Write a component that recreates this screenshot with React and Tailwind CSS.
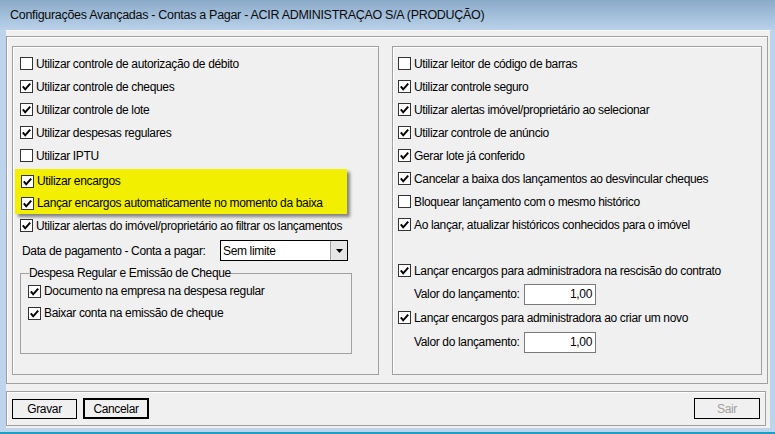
import React from 'react';

const Box = ({ on }) => (
  <span className="w-[13px] h-[13px] border border-[#333333] bg-white flex items-center justify-center shrink-0">
    {on && (
      <svg width="11" height="11" viewBox="0 0 11 11">
        <path d="M1.8 5.4 L4.2 8.3 L9.2 2.6" fill="none" stroke="#000" strokeWidth="2" />
      </svg>
    )}
  </span>
);

const Row = ({ on, label, className = 'h-[23px]' }) => (
  <div className={'flex items-center gap-[3px] ' + className}>
    <Box on={on} />
    <span className="whitespace-nowrap">{label}</span>
  </div>
);

const Valor = ({ className }) => (
  <div className={'flex items-center pl-[16px] ' + className}>
    <span className="w-[110px] whitespace-nowrap">Valor do lançamento:</span>
    <div className="w-[72px] h-[21px] border border-[#7a7a7a] bg-white flex items-center justify-end pr-[3px]">1,00</div>
  </div>
);

export default function App() {
  return (
    <div className="w-[775px] h-[434px] bg-[#bed4ec] overflow-hidden flex flex-col text-[12px] tracking-[-0.35px] text-black font-['Liberation_Sans',Arial,sans-serif] leading-[14px]">
      {/* Title bar */}
      <div className="h-[30px] shrink-0 bg-gradient-to-b from-[#8aaac9] to-[#bad2ea] flex items-center pl-[10px] text-[12.5px] tracking-[-0.3px] text-[#0a0a0a]">
        Configurações Avançadas - Contas a Pagar - ACIR ADMINISTRAÇAO S/A (PRODUÇÃO)
      </div>

      {/* Client area */}
      <div className="ml-[6px] w-[764px] h-[398px] bg-[#f0f0f0] border-t border-[#fafafa] pt-[5px] flex flex-col">
        <div className="w-[762px] h-[348px] border border-[#a0a0a0] shadow-[inset_1px_1px_0_#ffffff] flex pt-[9px] pl-[5px] gap-[13px]">
          {/* Left group */}
          <div className="w-[367px] h-[329px] border border-[#a0a0a0] shadow-[inset_1px_1px_0_#ffffff] pt-[5px] pl-[7px]">
            <Row on={false} label="Utilizar controle de autorização de débito" />
            <Row on label="Utilizar controle de cheques" />
            <Row on label="Utilizar controle de lote" />
            <Row on label="Utilizar despesas regulares" />
            <Row on={false} label="Utilizar IPTU" />
            <div className="-ml-[5px] w-[332px] mt-[2px] pt-[1px] pl-[6px] bg-[#f2f000] shadow-[3px_3px_3px_rgba(0,0,0,0.45)]">
              <Row on label="Utilizar encargos" className="h-[22px]" />
              <Row on label="Lançar encargos automaticamente no momento da baixa" className="h-[22px]" />
            </div>
            <Row on label="Utilizar alertas do imóvel/proprietário ao filtrar os lançamentos" />
            <div className="flex items-center h-[27px] pl-[2px]">
              <span className="w-[198px] whitespace-nowrap">Data de pagamento - Conta a pagar:</span>
              <div className="w-[128px] h-[21px] border border-black bg-white flex">
                <span className="flex-1 flex items-center pl-[2px]">Sem limite</span>
                <span className="w-[17px] bg-[#e6e6e6] border-l border-[#a0a0a0] flex items-center justify-center">
                  <svg width="7" height="4" viewBox="0 0 7 4"><path d="M0 0 H7 L3.5 4 Z" fill="#000" /></svg>
                </span>
              </div>
            </div>
            <fieldset className="mt-[2px] w-[332px] h-[88px] border border-[#a0a0a0] px-[7px]">
              <legend className="ml-[1px] leading-[14px]">Despesa Regular e Emissão de Cheque</legend>
              <Row on label="Documento na empresa na despesa regular" className="h-[22px]" />
              <Row on label="Baixar conta na emissão de cheque" className="h-[22px]" />
            </fieldset>
          </div>

          {/* Right group */}
          <div className="w-[370px] h-[329px] border border-[#a0a0a0] shadow-[inset_1px_1px_0_#ffffff] pt-[5px] pl-[5px]">
            <Row on={false} label="Utilizar leitor de código de barras" />
            <Row on label="Utilizar controle seguro" />
            <Row on label="Utilizar alertas imóvel/proprietário ao selecionar" />
            <Row on label="Utilizar controle de anúncio" />
            <Row on label="Gerar lote já conferido" />
            <Row on label="Cancelar a baixa dos lançamentos ao desvincular cheques" />
            <Row on={false} label="Bloquear lançamento com o mesmo histórico" />
            <Row on label="Ao lançar, atualizar históricos conhecidos para o imóvel" />
            <Row on label="Lançar encargos para administradora na rescisão do contrato" className="h-[23px] mt-[23px]" />
            <Valor className="h-[24px]" />
            <Row on label="Lançar encargos para administradora ao criar um novo" />
            <Valor className="h-[26px]" />
          </div>
        </div>

        {/* Bottom bar */}
        <div className="mt-[7px] w-[760px] h-[35px] border border-[#a0a0a0] shadow-[inset_1px_1px_0_#ffffff] flex items-center px-[5px]">
          <button className="w-[65px] h-[20px] border border-black bg-[#f0f0f0] flex items-center justify-center">Gravar</button>
          <button className="ml-[6px] w-[66px] h-[21px] border-2 border-black bg-[#f0f0f0] flex items-center justify-center">Cancelar</button>
          <button className="ml-auto w-[66px] h-[21px] border border-black bg-[#f0f0f0] text-[#a0a0a0] flex items-center justify-center">Sair</button>
        </div>
      </div>
      <div className="mt-auto h-[2px] bg-[#1d9fc4]" />
    </div>
  );
}
